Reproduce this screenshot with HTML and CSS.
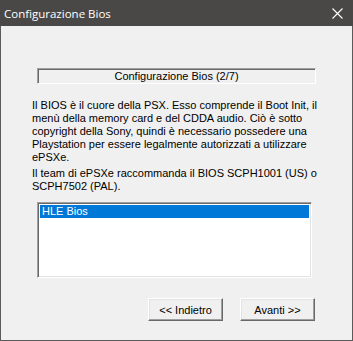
FILE: index.html
```html
<!DOCTYPE html>
<html>
<head>
<meta charset="utf-8">
<link rel="stylesheet" href="styles.css">
</head>
<body>
<div class="window">
  <div class="titlebar">
    <span class="title">Configurazione Bios</span>
    <svg class="close" width="11" height="11" viewBox="0 0 11 11"><path d="M0.5 0.5 L10.5 10.5 M10.5 0.5 L0.5 10.5" stroke="#ffffff" stroke-width="1.1" fill="none"/></svg>
  </div>
  <div class="content">
    <div class="step">Configurazione Bios (2/7)</div>
    <p class="para">Il BIOS è il cuore della PSX. Esso comprende il Boot Init, il<br>menù della memory card e del CDDA audio. Ciò è sotto<br>copyright della Sony, quindi è necessario possedere una<br>Playstation per essere legalmente autorizzati a utilizzare<br>ePSXe.</p>
    <p class="para second">Il team di ePSXe raccommanda il BIOS SCPH1001 (US) o<br>SCPH7502 (PAL).</p>
    <div class="listbox">
      <div class="item selected">HLE Bios</div>
    </div>
    <div class="buttons">
      <button class="btn">&lt;&lt; Indietro</button>
      <button class="btn">Avanti &gt;&gt;</button>
    </div>
  </div>
</div>
</body>
</html>
```
FILE: styles.css
```css
html, body {
  margin: 0;
  padding: 0;
  background: #f0f0f0;
}
.window {
  width: 353px;
  height: 341px;
  box-sizing: border-box;
  border: 1px solid #5a5a5a;
  border-top: none;
  background: #f0f0f0;
  display: flex;
  flex-direction: column;
}
.titlebar {
  height: 26px;
  background: #4a4846;
  display: flex;
  align-items: center;
  justify-content: space-between;
  padding: 0 10px 0 4px;
  margin: 0 -1px;
}
.title {
  font-family: "Open Sans", "Noto Sans", sans-serif;
  font-size: 11.5px;
  color: #ffffff;
}
.close {
  display: block;
}
.content {
  padding: 42px 0 0 31px;
  font-family: "Liberation Sans", Arial, sans-serif;
  font-size: 11px;
  color: #000;
}
.step {
  margin-left: 5px;
  width: 279px;
  height: 16px;
  box-sizing: border-box;
  border: 1px solid;
  border-color: #a0a0a0 #ffffff #ffffff #a0a0a0;
  box-shadow: inset 1px 1px #696969;
  text-align: center;
  line-height: 14px;
}
.para {
  margin: 15px 0 0 0;
  line-height: 13px;
  white-space: nowrap;
}
.para.second {
  margin-top: 3px;
}
.listbox {
  margin: 9px 0 0 5px;
  width: 275px;
  height: 76px;
  box-sizing: border-box;
  background: #ffffff;
  border: 1px solid;
  border-color: #a0a0a0 #ffffff #ffffff #a0a0a0;
  box-shadow: inset 1px 1px #696969, inset -1px -1px #e3e3e3;
  padding: 2px 2px 0 2px;
}
.item {
  height: 13px;
  line-height: 13px;
  padding-left: 2px;
}
.item.selected {
  background: #0078d7;
  color: #ffffff;
}
.buttons {
  margin: 20px 0 0 116px;
  display: flex;
  gap: 17px;
}
.btn {
  width: 75px;
  height: 23px;
  box-sizing: border-box;
  margin: 0;
  padding: 0;
  background: #f0f0f0;
  font-family: "Liberation Sans", Arial, sans-serif;
  font-size: 11px;
  color: #000;
  border: 1px solid;
  border-color: #ffffff #696969 #696969 #ffffff;
  box-shadow: inset -1px -1px #a0a0a0, inset 1px 1px #e3e3e3;
}
```
